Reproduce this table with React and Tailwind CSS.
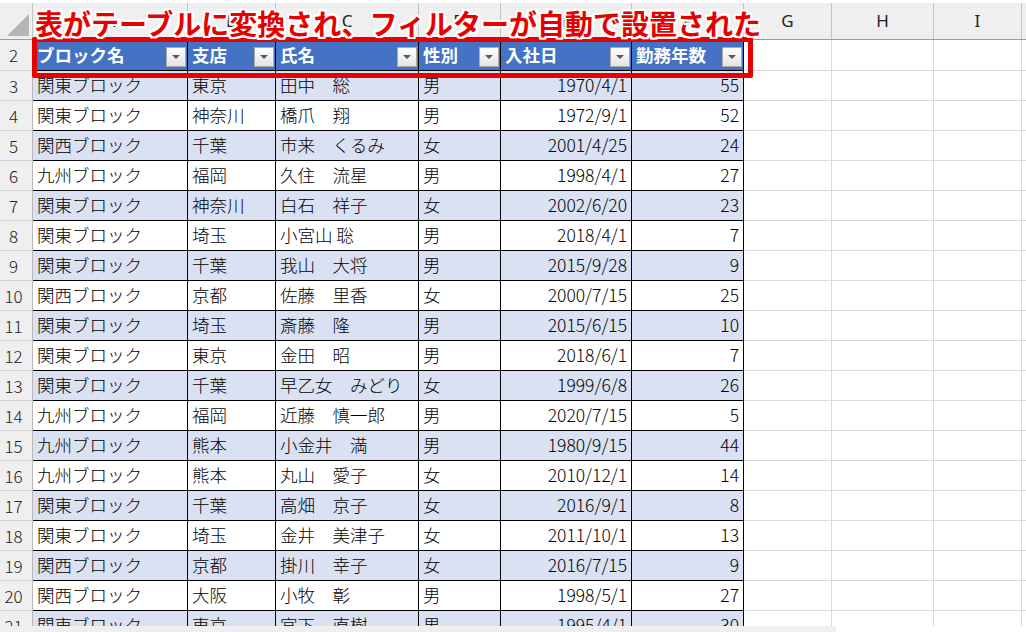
// App.jsx
import React from 'react';

const ROWS = [
  ['関東ブロック', '東京', '田中　総', '男', '1970/4/1', '55'],
  ['関東ブロック', '神奈川', '橋爪　翔', '男', '1972/9/1', '52'],
  ['関西ブロック', '千葉', '市来　くるみ', '女', '2001/4/25', '24'],
  ['九州ブロック', '福岡', '久住　流星', '男', '1998/4/1', '27'],
  ['関東ブロック', '神奈川', '白石　祥子', '女', '2002/6/20', '23'],
  ['関東ブロック', '埼玉', '小宮山 聡', '男', '2018/4/1', '7'],
  ['関東ブロック', '千葉', '我山　大将', '男', '2015/9/28', '9'],
  ['関西ブロック', '京都', '佐藤　里香', '女', '2000/7/15', '25'],
  ['関東ブロック', '埼玉', '斎藤　隆', '男', '2015/6/15', '10'],
  ['関東ブロック', '東京', '金田　昭', '男', '2018/6/1', '7'],
  ['関東ブロック', '千葉', '早乙女　みどり', '女', '1999/6/8', '26'],
  ['九州ブロック', '福岡', '近藤　慎一郎', '男', '2020/7/15', '5'],
  ['九州ブロック', '熊本', '小金井　満', '男', '1980/9/15', '44'],
  ['九州ブロック', '熊本', '丸山　愛子', '女', '2010/12/1', '14'],
  ['関東ブロック', '千葉', '高畑　京子', '女', '2016/9/1', '8'],
  ['関東ブロック', '埼玉', '金井　美津子', '女', '2011/10/1', '13'],
  ['関西ブロック', '京都', '掛川　幸子', '女', '2016/7/15', '9'],
  ['関西ブロック', '大阪', '小牧　彰', '男', '1998/5/1', '27'],
  ['関東ブロック', '東京', '宮下　直樹', '男', '1995/4/1', '30'],
];

const HEADERS = ['ブロック名', '支店', '氏名', '性別', '入社日', '勤務年数'];

// table columns A-F, then plain sheet columns G-I
const TABLE_COLS = [
  { w: 'w-[155px]', right: false },
  { w: 'w-[88px]', right: false },
  { w: 'w-[143px]', right: false },
  { w: 'w-[82px]', right: false },
  { w: 'w-[131px]', right: true },
  { w: 'w-[112px]', right: true },
];
const EXTRA_COLS = ['w-[88px]', 'w-[102px]', 'w-[88px]'];
const LETTERS = ['A', 'B', 'C', 'D', 'E', 'F'];
const EXTRA_LETTERS = ['G', 'H', 'I'];

const FilterButton = () => (
  <div className="mb-[3px] flex h-[20px] w-[20px] shrink-0 items-center justify-center self-end border border-[#ababab] bg-linear-to-b from-white to-[#e4e4e4]">
    <div className="h-0 w-0 border-t-[4px] border-r-[4px] border-l-[4px] border-t-[#595959] border-r-transparent border-l-transparent" />
  </div>
);

const RowHead = ({ n, h }) => (
  <div className={`${h} flex w-[33px] shrink-0 items-center justify-center border-r border-b border-r-[#b8b8b8] border-b-[#d4d4d4] bg-[#efefef] pr-[5px] text-[17px] font-light text-[#222]`}>
    {n}
  </div>
);

const Blanks = () => (
  <>
    {EXTRA_COLS.map((w, i) => (
      <div key={i} className={`${w} h-full shrink-0 border-r border-b border-[#dadada]`} />
    ))}
    <div className="h-full flex-1 border-b border-[#dadada]" />
  </>
);

export default function App() {
  return (
    <div className="relative flex h-[632px] w-[1026px] flex-col overflow-hidden bg-white [font-family:'Noto_Sans_CJK_JP',sans-serif]">
      <div className="flex flex-1 flex-col overflow-hidden">
        <div className="h-[3px] shrink-0 bg-white" />

        {/* column headers */}
        <div className="flex h-[37px] shrink-0 border-b border-[#9c9c9c] bg-[#efefef] text-[17px] text-[#222] [font-family:'Noto_Sans','Noto_Sans_CJK_JP',sans-serif]">
          <div className="relative w-[33px] shrink-0 border-r border-[#c4c4c4]">
            <div className="absolute right-[3px] bottom-[3px] h-0 w-0 border-b-[22px] border-l-[22px] border-b-[#b5b5b5] border-l-transparent" />
          </div>
          {TABLE_COLS.map((c, i) => (
            <div key={i} className={`${c.w} flex shrink-0 items-center justify-center border-r border-[#c4c4c4]`}>
              {LETTERS[i]}
            </div>
          ))}
          {EXTRA_COLS.map((w, i) => (
            <div key={i} className={`${w} flex shrink-0 items-center justify-center border-r border-[#c4c4c4]`}>
              {EXTRA_LETTERS[i]}
            </div>
          ))}
          <div className="flex-1" />
        </div>

        {/* table header row 2 */}
        <div className="flex h-[31px] shrink-0">
          <RowHead n={2} h="h-[31px]" />
          {TABLE_COLS.map((c, i) => (
            <div
              key={i}
              className={`${c.w} flex h-full shrink-0 justify-between border-r border-b border-black bg-[#4472c4] pr-[1px] pl-[4px] text-[17.5px] font-bold text-white`}
            >
              <span className="self-center whitespace-nowrap">{HEADERS[i]}</span>
              <FilterButton />
            </div>
          ))}
          <Blanks />
        </div>

        {ROWS.map((r, ri) => (
          <div key={ri} className="flex h-[30px] shrink-0">
            <RowHead n={ri + 3} h="h-[30px]" />
            {TABLE_COLS.map((c, i) => (
              <div
                key={i}
                className={`${c.w} flex h-full shrink-0 items-center overflow-hidden border-r border-b border-black px-[4px] text-[17.5px] font-light whitespace-pre text-black ${
                  ri % 2 === 0 ? 'bg-[#d9e1f2]' : 'bg-white'
                } ${c.right ? 'justify-end' : 'justify-start'}`}
              >
                {r[i]}
              </div>
            ))}
            <Blanks />
          </div>
        ))}
      </div>

      {/* horizontal scrollbar strip */}
      <div className="flex h-[6px] shrink-0 bg-white">
        <div className="h-full w-[836px] rounded-tr-[4px] bg-[#efefef]" />
      </div>

      {/* annotation overlay */}
      <div className="absolute top-[37px] left-[32px] h-[41px] w-[721px] rounded-[2px] border-[5px] border-[#e60000]" />
      <div className="absolute top-[9px] left-[35px] text-[28px] leading-[28px] font-bold whitespace-nowrap text-[#e60000] [text-shadow:2px_0_0_#fff,-2px_0_0_#fff,0_2px_0_#fff,0_-2px_0_#fff,2px_2px_0_#fff,-2px_-2px_0_#fff,2px_-2px_0_#fff,-2px_2px_0_#fff]">
        表がテーブルに変換され、フィルターが自動で設置された
      </div>
    </div>
  );
}
